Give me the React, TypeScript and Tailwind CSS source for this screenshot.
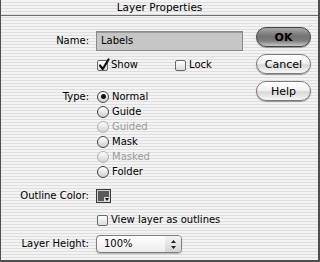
import React from 'react';

const stripes =
  'bg-[repeating-linear-gradient(to_bottom,#f3f3f3_0px,#f3f3f3_2px,#dedede_2px,#dedede_3px)]';

const AquaButton: React.FC<{ label: string; primary?: boolean }> = ({ label, primary }) => (
  <button
    className={`h-[20px] w-[55px] rounded-full border text-[11px] leading-none text-black shadow-[0_1px_1px_rgba(0,0,0,0.35)] ${
      primary
        ? 'border-[#444] bg-[linear-gradient(to_bottom,#a8a8a8_0%,#727272_45%,#7c7c7c_70%,#c6c6c6_100%)] font-bold'
        : 'border-[#7a7a7a] bg-[linear-gradient(to_bottom,#ffffff_0%,#f2f2f2_45%,#d8d8d8_55%,#f6f6f6_100%)]'
    }`}
  >
    {label}
  </button>
);

const Checkbox: React.FC<{ checked?: boolean }> = ({ checked }) => (
  <span className="relative inline-block h-[11px] w-[11px] shrink-0 rounded-[2px] border border-[#6a6a6a] bg-[linear-gradient(to_bottom,#ffffff,#dcdcdc)]">
    {checked && (
      <svg className="absolute -top-[3px] left-[0px]" width="12" height="13" viewBox="0 0 12 13">
        <path d="M2 7.5 L4.8 11 L10.5 1.5" fill="none" stroke="#111" strokeWidth="2.2" strokeLinecap="round" strokeLinejoin="round" />
      </svg>
    )}
  </span>
);

const Radio: React.FC<{ label: string; selected?: boolean; disabled?: boolean }> = ({ label, selected, disabled }) => (
  <div className="flex h-[15px] items-center gap-[3px]">
    <span
      className={`flex h-[12px] w-[12px] items-center justify-center rounded-full border bg-[linear-gradient(to_bottom,#ffffff,#d0d0d0)] ${
        disabled ? 'border-[#b0b0b0]' : 'border-[#444]'
      }`}
    >
      {selected && <span className="h-[5px] w-[5px] rounded-full bg-[#111]" />}
    </span>
    <span className={disabled ? 'text-[#9c9c9c]' : 'text-black'}>{label}</span>
  </div>
);

const Label: React.FC<{ children: React.ReactNode }> = ({ children }) => (
  <div className="w-[95px] shrink-0 pr-[7px] text-right text-black">{children}</div>
);

export default function App() {
  return (
    <div
      className={`flex h-[262px] w-[320px] flex-col border-b-2 border-l border-r-2 border-[#4e4e4e] ${stripes} text-[10px] leading-none`}
      style={{ fontFamily: '"DejaVu Sans", Verdana, sans-serif' }}
    >
      {/* Title bar */}
      <div className="flex h-[16px] shrink-0 items-center justify-center border-b border-[#6e6e6e] text-[10.5px] text-black">
        Layer Properties
      </div>

      <div className="flex flex-1">
        {/* Form */}
        <div className="flex flex-1 flex-col pt-[15px]">
          <div className="flex h-[20px] items-center">
            <Label>Name:</Label>
            <div className="flex h-[20px] w-[147px] items-center border border-[#8a8a8a] bg-[#c6c6c6] pl-[4px] text-black shadow-[inset_0_1px_0_#9a9a9a]">
              Labels
            </div>
          </div>

          <div className="mt-[8px] flex h-[12px] items-center pl-[96px]">
            <div className="flex w-[78px] items-center gap-[3px]">
              <Checkbox checked />
              <span>Show</span>
            </div>
            <div className="flex items-center gap-[3px]">
              <Checkbox />
              <span>Lock</span>
            </div>
          </div>

          <div className="mt-[18px] flex">
            <Label>
              <div className="flex h-[15px] items-center justify-end">Type:</div>
            </Label>
            <div className="flex flex-col pl-[1px]">
              <Radio label="Normal" selected />
              <Radio label="Guide" />
              <Radio label="Guided" disabled />
              <Radio label="Mask" />
              <Radio label="Masked" disabled />
              <Radio label="Folder" />
            </div>
          </div>

          <div className="mt-[10px] flex h-[14px] items-center">
            <Label>Outline Color:</Label>
            <div className="relative h-[14px] w-[15px] border border-[#3a3a3a] bg-[#5a5a5a] shadow-[inset_0_0_0_1px_#d0d0d0]">
              <span className="absolute bottom-[0px] right-[0px] h-[5px] w-[6px] bg-[#d8d8d8]" />
              <svg className="absolute bottom-[1px] right-[1px]" width="4" height="3" viewBox="0 0 4 3">
                <path d="M0 0 L4 0 L2 3 Z" fill="#111" />
              </svg>
            </div>
          </div>

          <div className="mt-[11px] flex h-[12px] items-center gap-[3px] pl-[96px]">
            <Checkbox />
            <span className="text-black">View layer as outlines</span>
          </div>

          <div className="mt-[9px] flex h-[18px] items-center">
            <Label>Layer Height:</Label>
            <div className="flex h-[18px] w-[86px] items-stretch overflow-hidden rounded-[4px] border border-[#7c7c7c] bg-[linear-gradient(to_bottom,#ffffff,#ececec)] shadow-[0_1px_1px_rgba(0,0,0,0.25)]">
              <div className="flex flex-1 items-center pl-[7px] text-black">100%</div>
              <div className="flex w-[16px] items-center justify-center bg-[linear-gradient(to_bottom,#f4f4f4,#d4d4d4)]">
                <svg width="5" height="9" viewBox="0 0 5 9">
                  <path d="M2.5 0 L5 3 L0 3 Z" fill="#222" />
                  <path d="M0 6 L5 6 L2.5 9 Z" fill="#222" />
                </svg>
              </div>
            </div>
          </div>
        </div>

        {/* Buttons */}
        <div className="flex w-[62px] flex-col gap-[7px] pt-[11px]">
          <AquaButton label="OK" primary />
          <AquaButton label="Cancel" />
          <AquaButton label="Help" />
        </div>
      </div>
    </div>
  );
}
